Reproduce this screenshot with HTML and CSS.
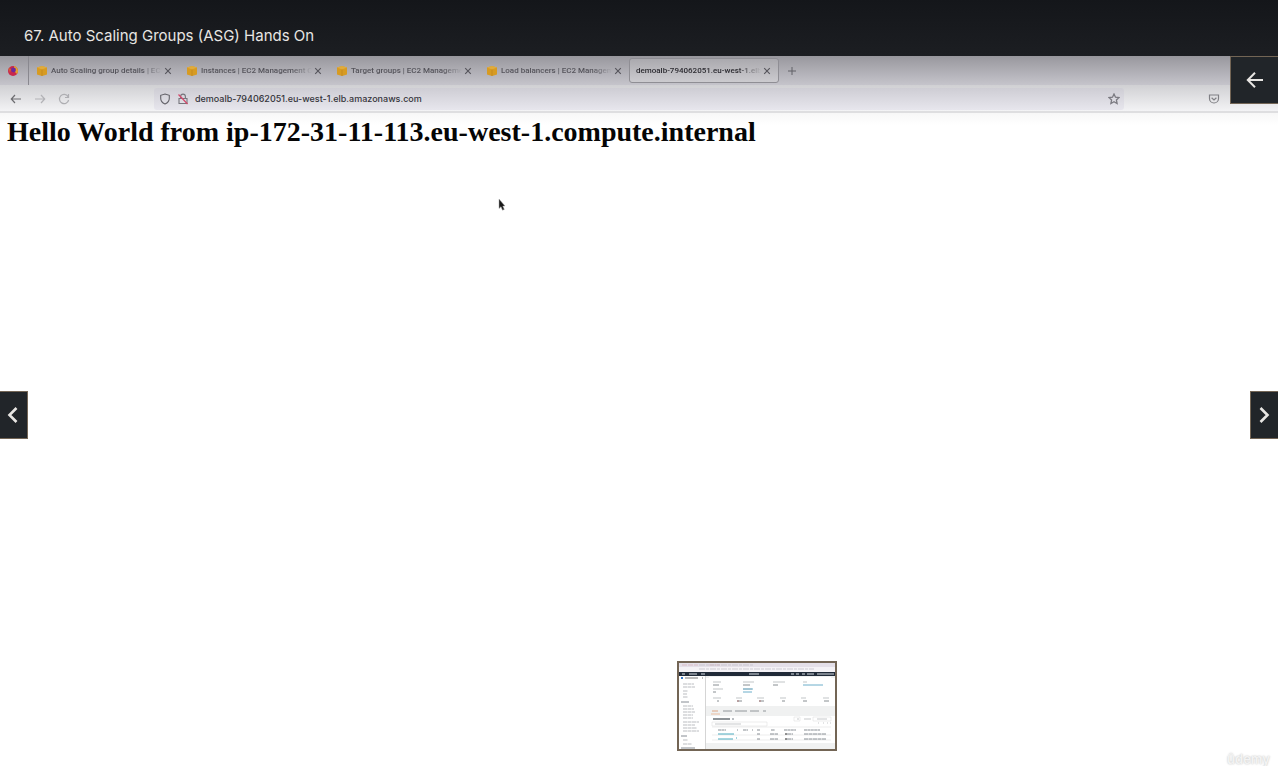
FILE: index.html
```html
<!DOCTYPE html>
<html lang="en">
<head>
<meta charset="utf-8">
<title>67. Auto Scaling Groups (ASG) Hands On</title>
<link rel="stylesheet" href="styles.css">
</head>
<body>
<svg class="defs" aria-hidden="true">
  <symbol id="cube" viewBox="0 0 10 10"><path d="M5 0 10 1.500v7L5 10 0 8.500v-7z" fill="#d79b22"/><path d="M5 0 10 1.500 5 3.500 0 1.500z" fill="#e0ab3c"/><path d="M5 3.500v6.500" stroke="#bd831c" stroke-width=".7" fill="none"/></symbol>
  <symbol id="close" viewBox="0 0 8 8"><path d="M1.200 1.200 6.800 6.800M6.800 1.200 1.200 6.800" stroke="#55545b" stroke-width="1.100" fill="none"/></symbol>
</svg>
<header class="title-bar"><h1 class="title">67. Auto Scaling Groups (ASG) Hands On</h1></header>
<main class="player">
  <section class="browser">
    <div class="tabs">
      <div class="pinned"><svg width="12" height="12" viewBox="0 0 12 12"><circle cx="6" cy="6" r="5" fill="#c9284c"/><path d="M7 1c4 1 5 5 3 8L7 6z" fill="#e5a32e"/><path d="M1.500 3 4 4l-1 4z" fill="#d9632f"/><circle cx="6.500" cy="5" r="2.400" fill="#6b2b9c"/></svg></div>
      <div class="tab"><svg class="cube"><use href="#cube"/></svg><a class="label" href="#">Auto Scaling group details | EC2</a><button class="close" aria-label="Close tab"><svg width="8" height="8"><use href="#close"/></svg></button></div>
      <div class="tab"><svg class="cube"><use href="#cube"/></svg><a class="label" href="#">Instances | EC2 Management C</a><button class="close" aria-label="Close tab"><svg width="8" height="8"><use href="#close"/></svg></button></div>
      <div class="tab"><svg class="cube"><use href="#cube"/></svg><a class="label" href="#">Target groups | EC2 Manageme</a><button class="close" aria-label="Close tab"><svg width="8" height="8"><use href="#close"/></svg></button></div>
      <div class="tab"><svg class="cube"><use href="#cube"/></svg><a class="label" href="#">Load balancers | EC2 Managem</a><button class="close" aria-label="Close tab"><svg width="8" height="8"><use href="#close"/></svg></button></div>
      <div class="tab active"><a class="label" href="#">demoalb-794062051.eu-west-1.elb</a><button class="close" aria-label="Close tab"><svg width="8" height="8"><use href="#close"/></svg></button></div>
      <button class="new-tab" aria-label="New tab"><svg width="10" height="10" viewBox="0 0 10 10"><path d="M5 1v8M1 5h8" stroke="#616067" fill="none"/></svg></button>
    </div>
    <div class="nav">
      <div class="nav-buttons">
        <button aria-label="Back"><svg width="12" height="12" viewBox="0 0 12 12"><path d="M11 6H1.500M5 2 1.300 6 5 10" stroke="#6c6c70" stroke-width="1.200" fill="none"/></svg></button>
        <button aria-label="Forward"><svg width="12" height="12" viewBox="0 0 12 12"><path d="M1 6h9.500M7 2l3.700 4L7 10" stroke="#b2b2b6" stroke-width="1.200" fill="none"/></svg></button>
        <button aria-label="Reload"><svg width="12" height="12" viewBox="0 0 12 12"><path d="M10 3.600A4.600 4.600 0 1 0 10.600 7M10.500 1v3.500H7" stroke="#aeaeb2" stroke-width="1.200" fill="none"/></svg></button>
      </div>
      <div class="address">
        <svg width="12" height="12" viewBox="0 0 12 12"><path d="M6 1 10.300 2.300v3C10.300 8 8.500 10 6 11 3.500 10 1.700 8 1.700 5.300v-3z" stroke="#64636a" stroke-width="1.100" fill="none"/></svg>
        <svg width="12" height="12" viewBox="0 0 12 12"><path d="M3.600 5.500v-2a2.400 2.400 0 0 1 4.800 0v2M2 5.500h8v5H2z" stroke="#76757c" stroke-width="1.100" fill="none"/><path d="M1.500 1.500 10.500 11" stroke="#d34669" stroke-width="1.200"/></svg>
        <input class="url" aria-label="Address" value="demoalb-794062051.eu-west-1.elb.amazonaws.com">
        <button aria-label="Bookmark"><svg width="12" height="12" viewBox="0 0 12 12"><path d="m6 1 1.500 3.200 3.500.4-2.600 2.300.7 3.600L6 8.700l-3.100 1.800.7-3.600L1 4.600l3.500-.4z" stroke="#7b7a81" stroke-width="1.300" fill="none"/></svg></button>
      </div>
      <button class="pocket" aria-label="Save to Pocket"><svg width="12" height="12" viewBox="0 0 12 12"><path d="M1.500 2h9v3.500a4.500 4.500 0 0 1-9 0zM3.600 4.700 6 7l2.400-2.300" stroke="#808085" stroke-width="1.200" fill="none"/></svg></button>
    </div>
    <div class="page"><h2 class="hello">Hello World from ip-172-31-11-113.eu-west-1.compute.internal</h2></div>
  </section>
  <svg class="cursor" width="8" height="14" viewBox="0 0 8 14"><path d="M1 1v9.500l2-1.800 1.500 3.500 1.800-.8-1.500-3.300L7 8z" fill="#181818" stroke="#aaa" stroke-width=".5"/></svg>
  <button class="overlay back" aria-label="Open sidebar"><svg width="18" height="18" viewBox="0 0 18 18"><path d="M17 9H2M9 1.800 1.800 9 9 16.200" stroke="#e8e6e3" stroke-width="2" fill="none"/></svg></button>
  <button class="overlay side previous" aria-label="Previous lecture"><svg width="12" height="18" viewBox="0 0 12 18"><path d="M9.500 2 2.500 9l7 7" stroke="#e8e6e3" stroke-width="2.600" fill="none"/></svg></button>
  <button class="overlay side next" aria-label="Next lecture"><svg width="12" height="18" viewBox="0 0 12 18"><path d="m2.500 2 7 7-7 7" stroke="#e8e6e3" stroke-width="2.600" fill="none"/></svg></button>
  <div class="preview">
    <svg viewBox="0 0 156 86" role="img" aria-label="Seek preview">
      <path fill="#fff" d="M0 0h156v86H0z"/><path fill="#e4dfe8" d="M0 0h156v4H0z"/><path fill="#f4f2f6" d="M0 4h156v5H0z"/><path fill="#202a38" d="M0 9h156v4H0z"/>
      <path fill="#f0f1f1" d="M27 13h129v2H27zM27 43h129v10H27zM27 80h129v6H27z"/><path fill="#d5d5d5" d="M26 13h1v73h-1z"/><path fill="#fff" d="M30 14h122v28H30zM30 54h122v25H30z"/>
      <path stroke="#d5afb9" stroke-width=".7" d="M3 2h16M30 2h12" stroke-dasharray="5 1"/><path stroke="#bdbcc4" stroke-width=".7" d="M20 2h55M20 6h115" stroke-dasharray="6 1 3 1"/>
      <path stroke="#d6dce2" d="M3 11h3M10 11h8M22 11h4M70 11h10M112 11h3M117 11h3M123 11h3M128 11h7M138 11h17"/>
      <path stroke="#3777c5" stroke-width="2" d="M2 15h2"/><path stroke="#777" d="M6 15h13M23 15h1"/>
      <path stroke="#9ea2a7" stroke-width=".7" d="M4 21h11M4 24h12M4 28h5M4 31h4M4 34h5M4 43h10M4 46h11M4 49h12M4 52h10M4 55h10M4 59h16M4 62h12M4 65h14M4 68h16M4 77h5M4 81h9" stroke-dasharray="4 .5"/>
      <path stroke="#687078" stroke-width=".8" d="M2 39h8M2 73h6M2 85h14"/>
      <path stroke="#a6acb0" stroke-width=".7" d="M34 19h8M64 19h11M94 19h12M124 19h4M34 26h10M64 26h9M34 35h8M57 35h6M78 35h7M101 35h6M122 35h5M144 35h6"/>
      <path stroke="#697177" stroke-width=".8" d="M34 22h6M64 22h7M94 22h5M34 29h3M38 38h2M58 38h5M80 38h5M103 38h3M124 38h4M145 38h5"/><path stroke="#4699bc" stroke-width=".8" d="M124 22h20M64 26h10M64 29h9"/><path stroke="#a66565" stroke-width=".8" d="M58 38h2M80 38h2"/>
      <path stroke="#d9946a" stroke-width=".8" d="M33 48h6"/><path stroke="#e9a77d" stroke-width=".7" d="M32 51h9"/><path stroke="#788087" stroke-width=".8" d="M44 48h9M56 48h12M71 48h9M84 48h3"/>
      <path stroke="#454d54" stroke-width="1.200" d="M34 56h17"/><path stroke="#747d84" d="M53 56h2"/><path stroke="#d8dadb" fill="none" stroke-width=".5" d="M33 59h55v4H33zM115 54h6v4h-6zM134 54h18v4h-18zM33 64h119M33 72h119M33 77h119"/>
      <path stroke="#afb3b5" stroke-width=".7" d="M36 61h26M118 56h2M125 56h7M138 56h10M139 60h1M144 60h1M148 60h1M151 60h1"/>
      <path stroke="#697178" stroke-width=".8" d="M39 67h8M58 67h1M64 67h5M73 67h1M78 67h3M92 67h4M105 67h12M125 67h16" stroke-dasharray="3 .4"/>
      <path stroke="#37a0b7" stroke-width=".9" d="M39 71h16M39 76h15M57 75h1"/><path stroke="#69727a" stroke-width=".8" d="M78 71h3M78 76h3M91 71h8M91 76h8M108 71h6M108 76h6M125 71h22M125 76h22" stroke-dasharray="4 .5"/><path stroke="#222" d="M106 71h2M106 76h2"/>
    </svg>
  </div>
  <div class="watermark">ûdemy</div>
</main>
</body>
</html>
```
FILE: styles.css
```css
* { box-sizing: border-box; }
body { margin: 0; min-height: 100vh; display: flex; flex-direction: column; background: #fff; font-family: Inter, sans-serif; overflow: hidden; }
button { display: flex; align-items: center; justify-content: center; padding: 0; border: 0; background: none; }
svg { flex: none; }
.defs { display: none; }
.title-bar { height: 56px; padding: 15px 24px 0; background: linear-gradient(#14161a, #1c1e22); }
.title { margin: 0; font-size: 15px; line-height: 41px; font-weight: 400; color: #e8e6e3; }
.player { position: relative; flex: 1; display: flex; flex-direction: column; }
.browser { flex: 1; display: flex; flex-direction: column; }
.tabs { display: flex; height: 29px; background: linear-gradient(#98979d, #c5c4cb); }
.pinned { width: 29px; display: flex; align-items: center; padding-left: 7px; border-right: 1px solid #89888f; }
.tab { width: 150px; display: flex; align-items: center; padding: 0 5px 0 8px; }
.cube { width: 10px; height: 10px; margin-right: 4px; }
.label { flex: 1; min-width: 0; overflow: hidden; white-space: nowrap; font: 500 8px/12px Roboto, sans-serif; color: #55545b; text-decoration: none; mask-image: linear-gradient(90deg, #000 82%, transparent); }
.close { width: 12px; height: 12px; }
.tab.active { margin: 2px 0; padding: 0 5px 0 6px; background: linear-gradient(#aaa9ae, #cccbcf); border: 1px solid #8f8e94; border-radius: 3px; }
.tab.active .label { color: #2c2b31; }
.new-tab { width: 26px; }
.nav { display: flex; align-items: center; height: 28px; padding: 1px 58px 0 10px; background: linear-gradient(#d0d0d3, #f3f3f5); border-bottom: 2px solid #dedee0; }
.nav-buttons { display: flex; gap: 12px; width: 144px; }
.address { flex: 1; display: flex; align-items: center; gap: 6px; height: 22px; padding: 0 4px 0 5px; border-radius: 3px; background: linear-gradient(#cecdd4, #e7e6ed); }
.url { flex: 1; min-width: 0; padding: 0; border: 0; outline: 0; background: none; font: 500 9px Inter, sans-serif; color: #35343b; }
.pocket { margin-left: 84px; }
.page { flex: 1; padding: 3px 7px; background: linear-gradient(#f7f7f7, #fff 12px); }
.hello { margin: 0; font: bold 28px/32px "Liberation Serif", serif; color: #050505; white-space: nowrap; }
.cursor { position: absolute; left: 498px; top: 142px; }
.overlay { position: absolute; background: #212529; border: 1px solid #736555; }
.back { top: 0; right: 0; width: 48px; height: 48px; border-right: 0; }
.side { top: 335px; width: 28px; height: 48px; }
.previous { left: 0; border-left: 0; padding-right: 2px; }
.next { right: 0; border-right: 0; padding-right: 1px; }
.preview { position: absolute; left: 677px; bottom: 15px; width: 160px; border: 2px solid #736555; }
.preview svg { display: block; }
.watermark { position: absolute; right: 8px; bottom: -2px; font-size: 13px; line-height: 18px; font-weight: 600; color: #f3f3f3; text-shadow: 0 0 2px #bbb; }
```
